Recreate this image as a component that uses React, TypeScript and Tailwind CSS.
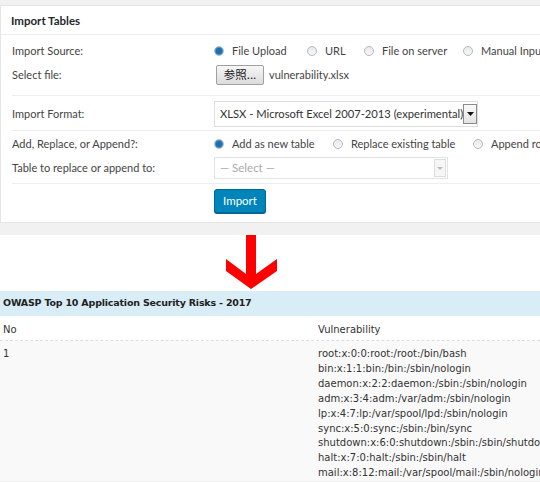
import React from "react";

const Radio = ({ checked }: { checked?: boolean }) => (
  <span className="relative inline-flex h-[10px] w-[10px] shrink-0 items-center justify-center rounded-full border border-[#b4b9be] bg-gradient-to-b from-[#e9e9e9] to-[#f8f8f8]">
    {checked && <span className="h-[6px] w-[6px] rounded-full bg-[#1e6fa8] shadow-[0_0_0_1px_#3d8ec7]" />}
  </span>
);

const RadioItem = ({ checked, label, w }: { checked?: boolean; label: string; w: string }) => (
  <span className={`flex shrink-0 items-center gap-[8px] ${w}`}>
    <Radio checked={checked} />
    <span className="whitespace-nowrap">{label}</span>
  </span>
);

const Row = ({ label, children, h }: { label: string; children?: React.ReactNode; h: string }) => (
  <div className={`flex items-center ${h}`}>
    <div className="w-[202px] shrink-0 whitespace-nowrap">{label}</div>
    <div className="flex items-center">{children}</div>
  </div>
);

const lines = [
  "root:x:0:0:root:/root:/bin/bash",
  "bin:x:1:1:bin:/bin:/sbin/nologin",
  "daemon:x:2:2:daemon:/sbin:/sbin/nologin",
  "adm:x:3:4:adm:/var/adm:/sbin/nologin",
  "lp:x:4:7:lp:/var/spool/lpd:/sbin/nologin",
  "sync:x:5:0:sync:/sbin:/bin/sync",
  "shutdown:x:6:0:shutdown:/sbin:/sbin/shutdown",
  "halt:x:7:0:halt:/sbin:/sbin/halt",
  "mail:x:8:12:mail:/var/spool/mail:/sbin/nologin",
];

export default function App() {
  return (
    <div className="h-[482px] w-[540px] overflow-hidden bg-[#f1f1f1]">
      <div className="pt-[5px]">
        <div className="w-[620px] border border-[#e5e5e5] bg-white font-['Lato',sans-serif] text-[11px] text-[#444]">
          <div className="flex h-[29px] items-center border-b border-[#eee] px-[10px] pt-[1px] text-[11.5px] font-bold text-[#23282d]">
            Import Tables
          </div>
          <div className="px-[11px]">
            <div className="border-b border-[#eee] pt-[4px] pb-[8px]">
              <Row label="Import Source:" h="h-[24px]">
                <RadioItem checked label="File Upload" w="w-[93px]" />
                <RadioItem label="URL" w="w-[57px]" />
                <RadioItem label="File on server" w="w-[99px]" />
                <RadioItem label="Manual Input" w="w-[100px]" />
              </Row>
              <Row label="Select file:" h="h-[24px]">
                <span className="ml-[2px] flex h-[20px] w-[48px] items-center justify-center rounded-[2px] border border-[#a0a0a0] bg-gradient-to-b from-[#f6f6f6] to-[#dcdcdc] font-['Noto_Sans_CJK_JP',sans-serif] text-[11.5px] text-[#222]">
                  参照...
                </span>
                <span className="ml-[5px]">vulnerability.xlsx</span>
              </Row>
            </div>
            <div className="border-b border-[#eee] pt-[5px] pb-[3px]">
              <Row label="Import Format:" h="h-[26px]">
                <div className="flex h-[26px] w-[264px] items-center justify-between border border-[#ddd] pl-[5px] pr-[1px] text-[11.2px] text-[#333]">
                  <span className="whitespace-nowrap">XLSX - Microsoft Excel 2007-2013 (experimental)</span>
                  <span className="flex h-[20px] w-[14px] shrink-0 items-center justify-center border border-[#8a8a8a] bg-gradient-to-b from-[#fafafa] to-[#e2e2e2]">
                    <svg width="7" height="4" viewBox="0 0 7 4"><path d="M0 0h7L3.5 4z" fill="#111" /></svg>
                  </span>
                </div>
              </Row>
            </div>
            <div className="border-b border-[#eee] pt-[1px] pb-[3px]">
              <Row label="Add, Replace, or Append?:" h="h-[24px]">
                <RadioItem checked label="Add as new table" w="w-[119px]" />
                <RadioItem label="Replace existing table" w="w-[140px]" />
                <RadioItem label="Append rows" w="w-[100px]" />
              </Row>
              <Row label="Table to replace or append to:" h="h-[24px]">
                <div className="flex h-[22px] w-[234px] items-center justify-between border border-[#e3e3e3] pl-[5px] pr-[1px] text-[11.5px] text-[#aaa]">
                  <span>— Select —</span>
                  <span className="flex h-[18px] w-[12px] items-center justify-center border border-[#ddd] bg-[#f6f6f6]">
                    <svg width="6" height="3" viewBox="0 0 6 3"><path d="M0 0h6L3 3z" fill="#bbb" /></svg>
                  </span>
                </div>
              </Row>
            </div>
            <div className="pt-[5px] pb-[9px] pl-[202px]">
              <span className="flex h-[24px] w-[52px] items-center justify-center rounded-[3px] border border-[#006799] bg-[#0085ba] text-[11.5px] text-white shadow-[0_1px_0_#006799]">
                Import
              </span>
            </div>
          </div>
        </div>
      </div>
      <div className="mt-[12px] bg-white">
        <div className="h-[56px]">
          <svg width="54" height="55" viewBox="0 0 54 55" className="ml-[225px]">
            <polygon
              points="21,0 31,0 31,39 52,24 52,36 26,54 1,36 1,24 21,39"
              fill="#ff0000"
            />
          </svg>
        </div>
        <div className="font-['DejaVu_Sans',sans-serif] text-[10px] text-[#333]">
          <div className="flex h-[25px] items-center bg-[#d9edf7] px-[3px] text-[9.5px] font-bold tracking-[-0.2px] text-[#222]">
            OWASP Top 10 Application Security Risks - 2017
          </div>
          <div className="flex h-[25px] items-center border-b border-dashed border-[#ddd] pt-[2px]">
            <div className="w-[318px] shrink-0 pl-[3px]">No</div>
            <div>Vulnerability</div>
          </div>
          <div className="flex bg-[#f9f9f9] pt-[6px]">
            <div className="w-[318px] shrink-0 pl-[3px] leading-[14.9px]">1</div>
            <div className="whitespace-nowrap leading-[14.9px]">
              {lines.map((l) => (
                <div key={l}>{l}</div>
              ))}
            </div>
          </div>
        </div>
      </div>
    </div>
  );
}
